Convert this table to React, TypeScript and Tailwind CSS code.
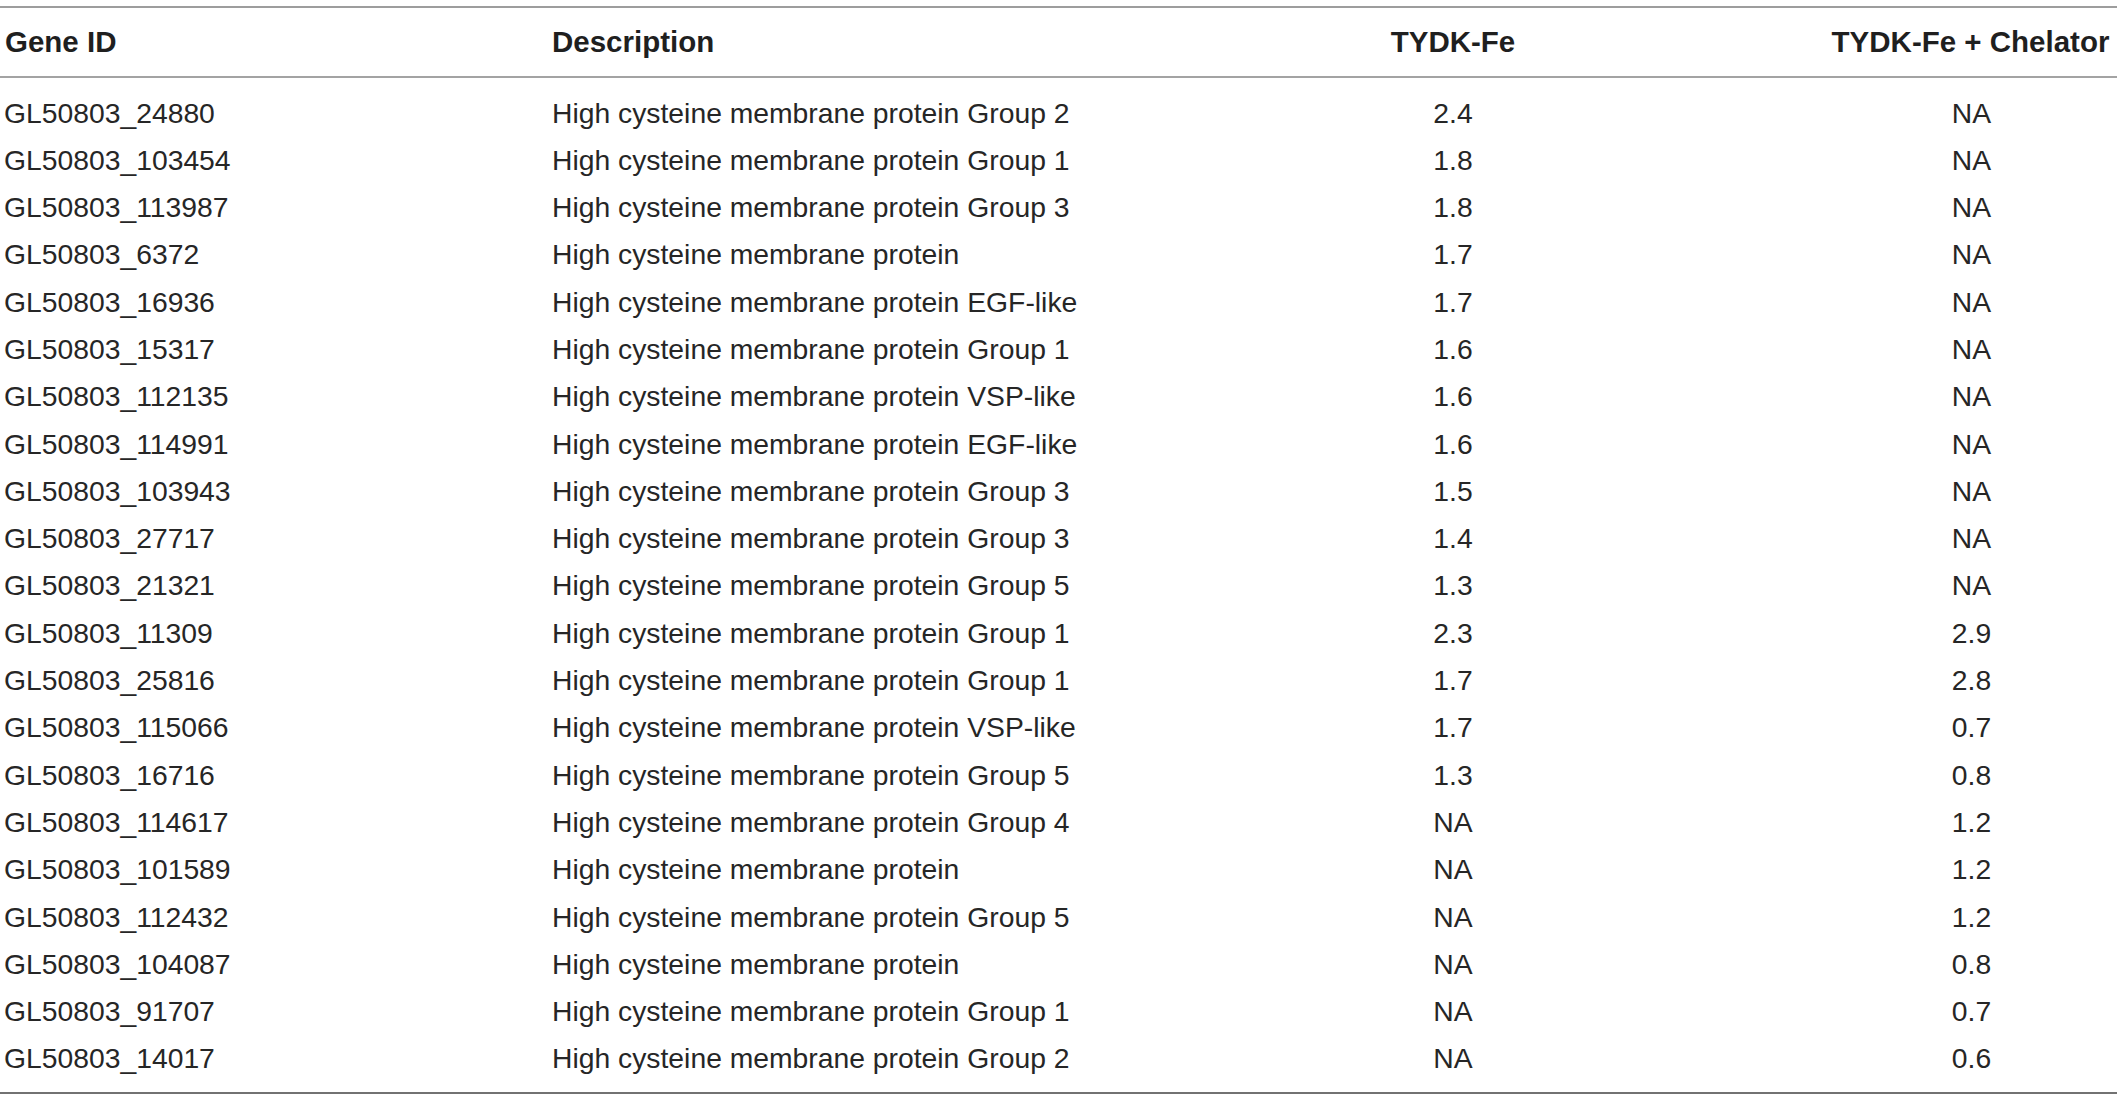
const rows: [string, string, string, string][] = [
  ["GL50803_24880", "High cysteine membrane protein Group 2", "2.4", "NA"],
  ["GL50803_103454", "High cysteine membrane protein Group 1", "1.8", "NA"],
  ["GL50803_113987", "High cysteine membrane protein Group 3", "1.8", "NA"],
  ["GL50803_6372", "High cysteine membrane protein", "1.7", "NA"],
  ["GL50803_16936", "High cysteine membrane protein EGF-like", "1.7", "NA"],
  ["GL50803_15317", "High cysteine membrane protein Group 1", "1.6", "NA"],
  ["GL50803_112135", "High cysteine membrane protein VSP-like", "1.6", "NA"],
  ["GL50803_114991", "High cysteine membrane protein EGF-like", "1.6", "NA"],
  ["GL50803_103943", "High cysteine membrane protein Group 3", "1.5", "NA"],
  ["GL50803_27717", "High cysteine membrane protein Group 3", "1.4", "NA"],
  ["GL50803_21321", "High cysteine membrane protein Group 5", "1.3", "NA"],
  ["GL50803_11309", "High cysteine membrane protein Group 1", "2.3", "2.9"],
  ["GL50803_25816", "High cysteine membrane protein Group 1", "1.7", "2.8"],
  ["GL50803_115066", "High cysteine membrane protein VSP-like", "1.7", "0.7"],
  ["GL50803_16716", "High cysteine membrane protein Group 5", "1.3", "0.8"],
  ["GL50803_114617", "High cysteine membrane protein Group 4", "NA", "1.2"],
  ["GL50803_101589", "High cysteine membrane protein", "NA", "1.2"],
  ["GL50803_112432", "High cysteine membrane protein Group 5", "NA", "1.2"],
  ["GL50803_104087", "High cysteine membrane protein", "NA", "0.8"],
  ["GL50803_91707", "High cysteine membrane protein Group 1", "NA", "0.7"],
  ["GL50803_14017", "High cysteine membrane protein Group 2", "NA", "0.6"],
];

export default function App() {
  return (
    <main className="w-[2117px] h-[1100px] bg-white pt-[6px] text-[#262626] font-['Liberation_Sans',Arial,sans-serif]">
      {/* table */}
      <section className="border-t-2 border-b-2 border-t-[#9d9d9d] border-b-[#727272]">
        {/* header row */}
        <div className="grid grid-cols-[552px_758px_286px_521px] h-[70px] items-center border-b-2 border-[#a3a3a3] text-[29.5px] font-bold leading-none text-[#1f1f1f]">
          <div className="pl-[5px]">Gene ID</div>
          <div>Description</div>
          <div className="text-center">TYDK-Fe</div>
          <div className="pl-[228px] text-center whitespace-nowrap">TYDK-Fe + Chelator</div>
        </div>

        {/* body rows */}
        <div className="pt-[11px] pb-[10px]">
          {rows.map((row, index) => (
            <div
              key={index}
              className="grid grid-cols-[552px_758px_286px_521px] h-[47.3px] items-center text-[28.3px] leading-none"
            >
              <div className="pl-[4px]">{row[0]}</div>
              <div>{row[1]}</div>
              <div className="text-center">{row[2]}</div>
              <div className="pl-[230px] text-center">{row[3]}</div>
            </div>
          ))}
        </div>
      </section>
    </main>
  );
}
